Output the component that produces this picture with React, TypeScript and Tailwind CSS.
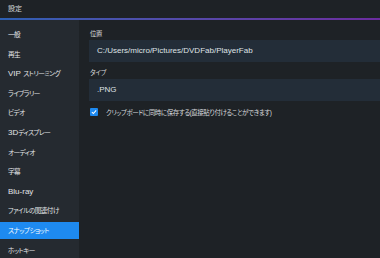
import React from "react";

type Item = { key: string; node: React.ReactNode };

const J = ({ children }: { children: React.ReactNode }) => (
  <span className="text-[6.6px] tracking-[-0.5px]">{children}</span>
);
const L = ({ children }: { children: React.ReactNode }) => (
  <span className="text-[8px]">{children}</span>
);

const items: Item[] = [
  { key: "一般", node: <J>一般</J> },
  { key: "再生", node: <J>再生</J> },
  { key: "VIP", node: (<><L>VIP</L><span className="ml-[2.5px]" /><J>ストリーミング</J></>) },
  { key: "ライブラリー", node: <J>ライブラリー</J> },
  { key: "ビデオ", node: <J>ビデオ</J> },
  { key: "3D", node: (<><L>3D</L><J>ディスプレー</J></>) },
  { key: "オーディオ", node: <J>オーディオ</J> },
  { key: "字幕", node: <J>字幕</J> },
  { key: "Blu-ray", node: <L>Blu-ray</L> },
  { key: "ファイル", node: <J>ファイルの関連付け</J> },
  { key: "スナップショット", node: <J>スナップショット</J> },
  { key: "ホットキー", node: <J>ホットキー</J> },
];

export default function App() {
  return (
    <div
      className="w-[380px] h-[258px] overflow-hidden bg-[#1e2226] text-[#d6d9dc] flex flex-col [font-feature-settings:'palt']"
      style={{ fontFamily: '"Liberation Sans", "Noto Sans CJK JP", sans-serif' }}
    >
      <div className="h-[18px] shrink-0 flex items-center px-[8px] text-[7px] bg-[#1e2226]">
        設定
      </div>
      <div className="h-[1.5px] shrink-0 bg-gradient-to-r from-[#2c5fb3] to-[#6b2c9f]" />
      <div className="flex flex-1 min-h-0">
        <div className="w-[79px] shrink-0 bg-[#252a30] pt-[7px] flex flex-col gap-[2.6px]">
          {items.map((it) => (
            <div
              key={it.key}
              className={
                "h-[17px] shrink-0 flex items-center px-[8px] whitespace-nowrap " +
                (it.key === "スナップショット" ? "bg-[#1e8af0] text-white" : "text-[#e2e4e6]")
              }
            >
              {it.node}
            </div>
          ))}
        </div>
        <div className="flex-1 pl-[10px] pt-[9px] flex flex-col">
          <div className="h-[10px] flex items-center pl-[1px] text-[6.4px] tracking-[-0.3px]">位置</div>
          <div className="mt-[1px] h-[22px] bg-[#232d38] flex items-center pl-[8px] text-[#dfe2e5] text-[8px]">
            C:/Users/micro/Pictures/DVDFab/PlayerFab
          </div>
          <div className="mt-[6px] h-[10px] flex items-center pl-[1px] text-[6.4px] tracking-[-0.3px]">タイプ</div>
          <div className="mt-[1px] h-[22px] bg-[#232d38] flex items-center pl-[8px] text-[#dfe2e5] text-[8px]">
            .PNG
          </div>
          <div className="mt-[7px] flex items-center gap-[8px] pl-[1px]">
            <div className="w-[8px] h-[8px] rounded-[1px] bg-[#1e8af0] flex items-center justify-center">
              <svg width="6" height="6" viewBox="0 0 10 10">
                <path d="M1.5 5.2 L4 7.6 L8.6 2.4" fill="none" stroke="white" strokeWidth="1.8" />
              </svg>
            </div>
            <span className="text-[6.5px] tracking-[-0.45px] text-[#d6d9dc]">
              クリップボードに同時に保存する(直接貼り付けることができます)
            </span>
          </div>
        </div>
      </div>
    </div>
  );
}
